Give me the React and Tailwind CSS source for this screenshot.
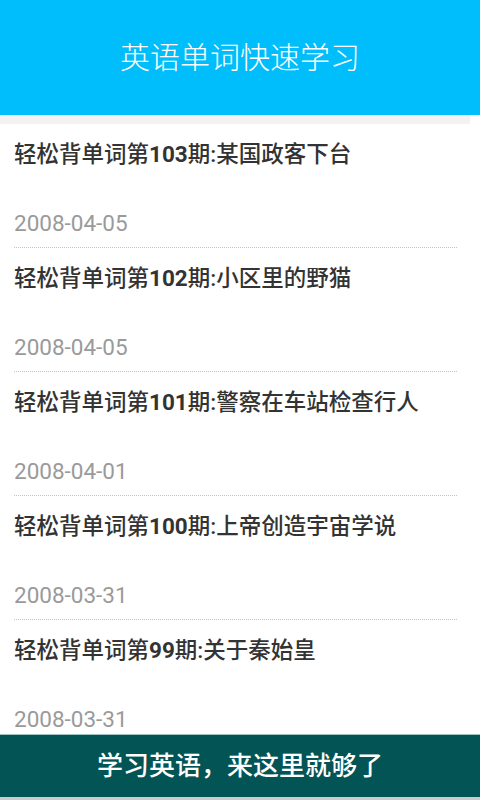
const items = [
  { no: "103", topic: "某国政客下台", date: "2008-04-05" },
  { no: "102", topic: "小区里的野猫", date: "2008-04-05" },
  { no: "101", topic: "警察在车站检查行人", date: "2008-04-01" },
  { no: "100", topic: "上帝创造宇宙学说", date: "2008-03-31" },
  { no: "99", topic: "关于秦始皇", date: "2008-03-31" },
];

function Item({ no, topic, date }) {
  return (
    <div className="pl-[14px] pt-[17px]">
      <div className="text-[22.5px] leading-[26px] font-medium text-[#333333] whitespace-nowrap">
        轻松背单词第<span className="font-bold">{no}</span>期:{topic}
      </div>
      <div className="mt-[43px] text-[22.5px] leading-[26px] text-[#9a9a9a]">{date}</div>
      <div className="mt-[11px] mr-[23px] border-b border-dotted border-[#c4c4c4]" />
    </div>
  );
}

export default function App() {
  return (
    <div
      className="h-[800px] w-[480px] flex flex-col bg-white overflow-hidden"
      style={{ fontFamily: "Roboto, 'Noto Sans CJK SC', sans-serif" }}
    >
      <header className="h-[115px] shrink-0 bg-[#00bdfb] flex items-center justify-center">
        <h1 className="text-[30px] font-light text-white">英语单词快速学习</h1>
      </header>
      <div className="h-[9px] shrink-0 mr-[10px] bg-[#f2f2f2]" />
      <div className="flex-1 overflow-hidden">
        {items.map((it) => (
          <Item key={it.no} {...it} />
        ))}
      </div>
      <footer className="shrink-0 h-[66px] flex flex-col">
        <div className="h-[63px] bg-[#035454] border-t border-[#9fc3c3] flex items-center justify-center">
          <span className="text-[26px] font-medium text-white">学习英语，来这里就够了</span>
        </div>
        <div className="flex-1 bg-[#c9cccc]" />
      </footer>
    </div>
  );
}
